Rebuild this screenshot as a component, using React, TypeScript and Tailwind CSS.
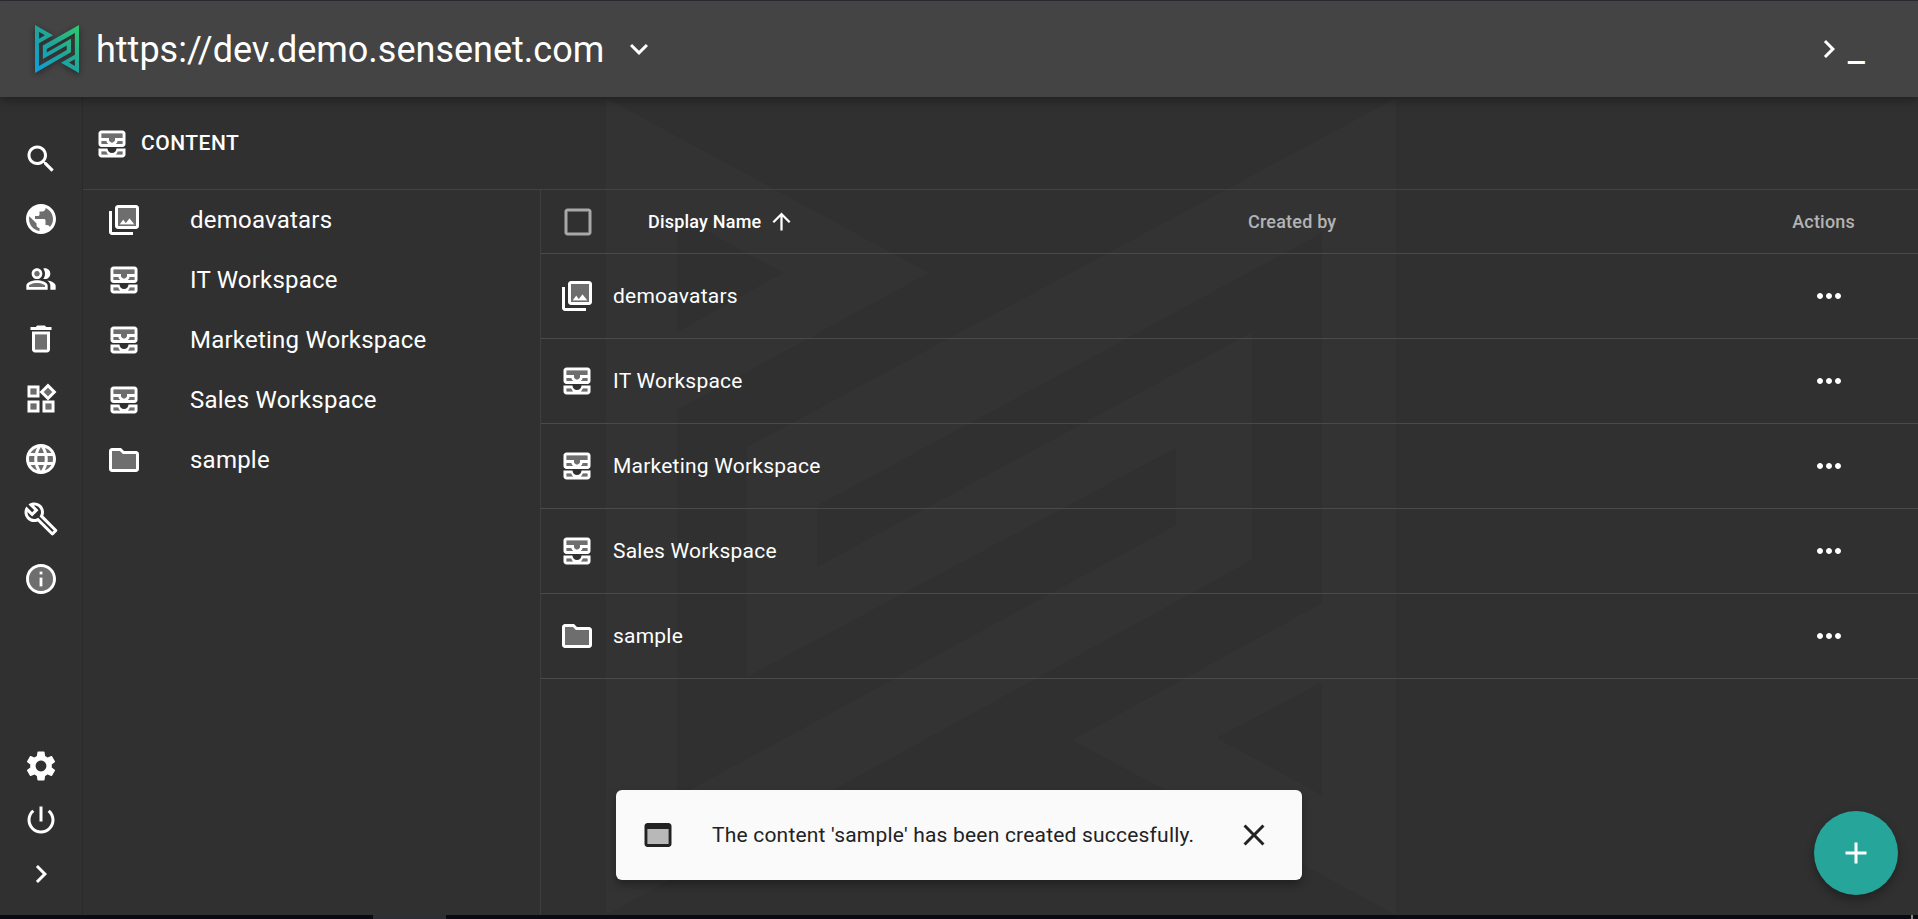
import type { ReactNode } from 'react';

// the mark is one band plus two triangular holes
const LOGO_PATH =
  'M1396 98V915L1072 740L1322 603V233L817 506V567L1252 332V560L606 915V98L929 273L677 410V797L1176 525V448L747 677V447Z' +
  'M677 215L783 273L677 332Z' +
  'M1322 682L1217 738L1322 795Z';

function Icon({ size = 36, className = '', children }: { size?: number; className?: string; children: ReactNode }) {
  return (
    <svg width={size} height={size} viewBox="0 0 24 24" fill="currentColor" className={`shrink-0 ${className}`}>
      {children}
    </svg>
  );
}

const Tone = ({ d }: { d: string }) => <path d={d} opacity={0.3} />;

const SearchIcon = () => (
  <Icon>
    <path d="M15.5 14h-.79l-.28-.27C15.41 12.59 16 11.11 16 9.5 16 5.91 13.09 3 9.5 3S3 5.91 3 9.5 5.91 16 9.5 16c1.61 0 3.09-.59 4.23-1.57l.27.28v.79l5 4.99L20.49 19l-4.99-5zm-6 0C7.01 14 5 11.99 5 9.5S7.01 5 9.5 5 14 7.01 14 9.5 11.99 14 9.5 14z" />
  </Icon>
);

const PublicIcon = () => (
  <Icon>
    <circle cx="12" cy="12" r="9" opacity={0.3} />
    <path d="M12 2C6.48 2 2 6.48 2 12s4.48 10 10 10 10-4.48 10-10S17.52 2 12 2zm-1 17.93c-3.95-.49-7-3.85-7-7.93 0-.62.08-1.21.21-1.79L9 15v1c0 1.1.9 2 2 2v1.93zm6.9-2.54c-.26-.81-1-1.39-1.9-1.39h-1v-3c0-.55-.45-1-1-1H8v-2h2c.55 0 1-.45 1-1V7h2c1.1 0 2-.9 2-2v-.41c2.93 1.19 5 4.06 5 7.41 0 2.08-.8 3.97-2.1 5.39z" />
  </Icon>
);

const GroupIcon = () => (
  <Icon size={32}>
    <circle cx="9" cy="8" r="2" opacity={0.3} />
    <Tone d="M9 15c-2.7 0-5.8 1.29-6 2.01V18h12v-1c-.2-.71-3.3-2-6-2z" />
    <path d="M16.67 13.13C18.04 14.06 19 15.32 19 17v3h4v-3c0-2.18-3.57-3.47-6.33-3.87zM15 12c2.21 0 4-1.79 4-4s-1.79-4-4-4c-.47 0-.91.1-1.33.24C14.5 5.27 15 6.58 15 8s-.5 2.73-1.33 3.76c.42.14.86.24 1.33.24zM9 12c2.21 0 4-1.79 4-4s-1.79-4-4-4-4 1.79-4 4 1.79 4 4 4zm0-6c1.1 0 2 .9 2 2s-.9 2-2 2-2-.9-2-2 .9-2 2-2zM9 13c-2.67 0-8 1.34-8 4v3h16v-3c0-2.66-5.33-4-8-4zm6 5H3v-.99C3.2 16.29 6.3 15 9 15s5.8 1.29 6 2v1z" />
  </Icon>
);

const DeleteIcon = () => (
  <Icon>
    <Tone d="M8 9h8v10H8z" />
    <path d="M15.5 4l-1-1h-5l-1 1H5v2h14V4zM6 19c0 1.1.9 2 2 2h8c1.1 0 2-.9 2-2V7H6v12zM8 9h8v10H8V9z" />
  </Icon>
);

const WidgetsIcon = () => (
  <Icon>
    <Tone d="M5 5h4v4H5zM15 15h4v4h-4zM5 15h4v4H5zM16.66 4.52l-2.83 2.82 2.83 2.83 2.83-2.83z" />
    <path d="M13 13v8h8v-8h-8zm6 6h-4v-4h4v4zM3 21h8v-8H3v8zm2-6h4v4H5v-4zM3 3v8h8V3H3zm6 6H5V5h4v4zm7.66-7.31L11 7.34 16.66 13l5.66-5.66-5.66-5.65zm0 8.48l-2.83-2.83 2.83-2.83 2.83 2.83-2.83 2.83z" />
  </Icon>
);

const LanguageIcon = () => (
  <Icon>
    <circle cx="12" cy="12" r="9" opacity={0.3} />
    <path d="M11.99 2C6.47 2 2 6.48 2 12s4.47 10 9.99 10C17.52 22 22 17.52 22 12S17.52 2 11.99 2zm6.93 6h-2.95c-.32-1.25-.78-2.45-1.38-3.56 1.84.63 3.37 1.91 4.33 3.56zM12 4.04c.83 1.2 1.48 2.53 1.91 3.96h-3.82c.43-1.43 1.08-2.76 1.91-3.96zM4.26 14C4.1 13.36 4 12.69 4 12s.1-1.36.26-2h3.38c-.08.66-.14 1.32-.14 2 0 .68.06 1.34.14 2H4.26zm.82 2h2.95c.32 1.25.78 2.45 1.38 3.56-1.84-.63-3.37-1.9-4.33-3.56zm2.95-8H5.08c.96-1.66 2.49-2.93 4.33-3.56C8.81 5.55 8.35 6.75 8.03 8zM12 19.96c-.83-1.2-1.48-2.53-1.91-3.96h3.82c-.43 1.43-1.08 2.76-1.91 3.96zM14.34 14H9.66c-.09-.66-.16-1.32-.16-2 0-.68.07-1.35.16-2h4.68c.09.65.16 1.32.16 2 0 .68-.07 1.34-.16 2zm.25 5.56c.6-1.11 1.06-2.31 1.38-3.56h2.95c-.96 1.65-2.49 2.93-4.33 3.56zM16.36 14c.08-.66.14-1.32.14-2 0-.68-.06-1.34-.14-2h3.38c.16.64.26 1.31.26 2s-.1 1.36-.26 2h-3.38z" />
  </Icon>
);

const BuildIcon = () => (
  <Icon>
    <path d="M22.61 18.99l-9.08-9.08c.93-2.34.45-5.1-1.44-7C9.79.61 6.21.4 3.66 2.25L7.5 6.1 6.08 7.5 2.25 3.69C.4 6.23.61 9.82 2.91 12.11c1.86 1.86 4.57 2.35 6.88 1.48l9.11 9.11c.39.39 1.02.39 1.41 0l2.3-2.3c.4-.38.4-1.01 0-1.41zm-3 1.6l-9.46-9.46c-.61.45-1.29.72-2 .82-1.36.2-2.79-.21-3.83-1.25C3.37 9.76 2.93 8.5 3 7.26l3.09 3.09 4.24-4.24-3.09-3.09c1.24-.07 2.49.37 3.44 1.31 1.08 1.08 1.49 2.57 1.24 3.96-.12.71-.42 1.37-.88 1.96l9.45 9.45-.88.88z" />
  </Icon>
);

const InfoIcon = () => (
  <Icon>
    <Tone d="M12 4c-4.41 0-8 3.59-8 8s3.59 8 8 8 8-3.59 8-8-3.59-8-8-8zm1 13h-2v-6h2v6zm0-8h-2V7h2v2z" />
    <path d="M11 7h2v2h-2zm0 4h2v6h-2zm1-9C6.48 2 2 6.48 2 12s4.48 10 10 10 10-4.48 10-10S17.52 2 12 2zm0 18c-4.41 0-8-3.59-8-8s3.59-8 8-8 8 3.59 8 8-3.59 8-8 8z" />
  </Icon>
);

const SettingsIcon = () => (
  <Icon>
    <path d="M19.14 12.94c.04-.3.06-.61.06-.94 0-.32-.02-.64-.07-.94l2.03-1.58c.18-.14.23-.41.12-.61l-1.92-3.32c-.12-.22-.37-.29-.59-.22l-2.39.96c-.5-.38-1.03-.7-1.62-.94l-.36-2.54c-.04-.24-.24-.41-.48-.41h-3.84c-.24 0-.43.17-.47.41l-.36 2.54c-.59.24-1.13.57-1.62.94l-2.39-.96c-.22-.08-.47 0-.59.22L2.74 8.87c-.12.21-.08.47.12.61l2.03 1.58c-.05.3-.09.63-.09.94s.02.64.07.94l-2.03 1.58c-.18.14-.23.41-.12.61l1.92 3.32c.12.22.37.29.59.22l2.39-.96c.5.38 1.03.7 1.62.94l.36 2.54c.05.24.24.41.48.41h3.84c.24 0 .44-.17.47-.41l.36-2.54c.59-.24 1.13-.56 1.62-.94l2.39.96c.22.08.47 0 .59-.22l1.92-3.32c.12-.22.07-.47-.12-.61l-2.01-1.58zM12 15.6c-1.98 0-3.6-1.62-3.6-3.6s1.62-3.6 3.6-3.6 3.6 1.62 3.6 3.6-1.62 3.6-3.6 3.6z" />
  </Icon>
);

const PowerIcon = () => (
  <Icon>
    <path d="M13 3h-2v10h2V3zm4.83 2.17l-1.42 1.42C17.99 7.86 19 9.81 19 12c0 3.87-3.13 7-7 7s-7-3.13-7-7c0-2.19 1.01-4.14 2.58-5.42L6.17 5.17C4.23 6.82 3 9.26 3 12c0 4.97 4.03 9 9 9s9-4.03 9-9c0-2.74-1.23-5.18-3.17-6.83z" />
  </Icon>
);

const ChevronRight = () => (
  <Icon>
    <path d="M10 6L8.59 7.41 13.17 12l-4.58 4.59L10 18l6-6z" />
  </Icon>
);

const ExpandMore = () => (
  <Icon>
    <path d="M16.59 8.59L12 13.17 7.41 8.59 6 10l6 6 6-6z" />
  </Icon>
);

const InboxIcon = () => (
  <Icon>
    <Tone d="M5 5h14v3h-5v1c0 1.1-.9 2-2 2s-2-.9-2-2V8H5zM5 10h3.13c.21.78.67 1.47 1.27 2H5zM19 12h-4.4c.6-.53 1.06-1.22 1.27-2H19zM5 17h3.13c.21.78.67 1.47 1.27 2H5zM19 19h-4.4c.6-.53 1.06-1.22 1.27-2H19z" />
    <path
      fillRule="evenodd"
      d="M19 3H5c-1.1 0-2 .9-2 2v7c0 1.1.9 2 2 2h14c1.1 0 2-.9 2-2V5c0-1.1-.9-2-2-2zM5 10h3.13c.21.78.67 1.47 1.27 2H5zm14 2h-4.4c.6-.53 1.06-1.22 1.27-2H19zm0-4h-5v1c0 1.1-.9 2-2 2s-2-.9-2-2V8H5V5h14zM15 15c0 1.66-1.34 3-3 3s-3-1.34-3-3H3v4c0 1.1.9 2 2 2h14c1.1 0 2-.9 2-2v-4zM5 17h3.13c.21.78.67 1.47 1.27 2H5zm14 2h-4.4c.6-.53 1.06-1.22 1.27-2H19z"
    />
  </Icon>
);

const PhotoLibraryIcon = () => (
  <Icon>
    <Tone d="M8 16h12V4H8v12zm3.5-4.33l1.69 2.26 2.48-3.09L19 15H9l2.5-3.33z" />
    <path d="M20 4v12H8V4h12m0-2H8c-1.1 0-2 .9-2 2v12c0 1.1.9 2 2 2h12c1.1 0 2-.9 2-2V4c0-1.1-.9-2-2-2zm-8.5 9.67l1.69 2.26 2.48-3.1L19 15H9zM2 6v14c0 1.1.9 2 2 2h14v-2H4V6H2z" />
  </Icon>
);

const FolderIcon = () => (
  <Icon>
    <Tone d="M11.17 8l-.59-.59L9.17 6H4v12h16V8h-8z" />
    <path d="M20 6h-8l-2-2H4c-1.1 0-1.99.9-1.99 2L2 18c0 1.1.9 2 2 2h16c1.1 0 2-.9 2-2V8c0-1.1-.9-2-2-2zm0 12H4V6h5.17l1.41 1.41.59.59H20v10z" />
  </Icon>
);

const items = [
  { name: 'demoavatars', icon: <PhotoLibraryIcon /> },
  { name: 'IT Workspace', icon: <InboxIcon /> },
  { name: 'Marketing Workspace', icon: <InboxIcon /> },
  { name: 'Sales Workspace', icon: <InboxIcon /> },
  { name: 'sample', icon: <FolderIcon /> },
];

const navTop = [SearchIcon, PublicIcon, GroupIcon, DeleteIcon, WidgetsIcon, LanguageIcon, BuildIcon, InfoIcon];
const navBottom = [SettingsIcon, PowerIcon, ChevronRight];

function Logo() {
  return (
    <svg width="44" height="48" viewBox="606 98 790 817" preserveAspectRatio="none" className="shrink-0 drop-shadow-[0_2px_3px_rgba(0,0,0,0.45)]">
      <defs>
        <linearGradient id="logoGrad" x1="606" y1="915" x2="1396" y2="98" gradientUnits="userSpaceOnUse">
          <stop offset="0" stopColor="#0c9ee0" />
          <stop offset="0.5" stopColor="#1fa59a" />
          <stop offset="1" stopColor="#2fc96c" />
        </linearGradient>
      </defs>
      <path d={LOGO_PATH} fill="url(#logoGrad)" fillRule="evenodd" />
    </svg>
  );
}

export default function App() {
  return (
    <div className="relative flex h-screen w-full flex-col overflow-hidden bg-[#0a0a14] font-[Roboto,sans-serif] text-white">
      <div className="h-px bg-[#2a2e33]" />

      <header className="relative z-20 flex h-[96px] shrink-0 items-center justify-between bg-[#444444] pl-[35px] pr-[53px] shadow-[0_3px_10px_rgba(0,0,0,0.35)]">
        <div className="flex items-center">
          <Logo />
          <span className="ml-[17px] mt-[2px] text-[36px] leading-none">https://dev.demo.sensenet.com</span>
          <span className="ml-[17px]">
            <ExpandMore />
          </span>
        </div>
        <div className="flex items-center">
          <ChevronRight />
          <span className="ml-[1px] mt-[-3px] text-[38px] leading-none">_</span>
        </div>
      </header>

      <div className="relative flex min-h-0 flex-1 bg-[#303030]">
        {/* faint logo behind the content */}
        <svg className="pointer-events-none absolute left-0 top-[-97px] h-[919px] w-[1918px]" viewBox="0 0 1918 919">
          <path d={LOGO_PATH} fill="#333333" fillRule="evenodd" />
        </svg>

        <nav className="relative flex w-[83px] shrink-0 flex-col justify-between border-r border-[#2a2a2a] bg-[#303030] pb-[14px] pt-[32px]">
          <div className="flex flex-col items-center">
            {navTop.map((NavIcon, i) => (
              <div key={i} className="flex h-[60px] items-center justify-center">
                <NavIcon />
              </div>
            ))}
          </div>
          <div className="flex flex-col items-center">
            {navBottom.map((NavIcon, i) => (
              <div key={i} className="flex h-[54px] items-center justify-center">
                <NavIcon />
              </div>
            ))}
          </div>
        </nav>

        <main className="relative flex min-w-0 flex-1 flex-col">
          <div className="flex h-[93px] shrink-0 items-center border-b border-[#424242] pl-[11px] pt-[2px]">
            <InboxIcon />
            <span className="ml-[11px] text-[21px] font-medium uppercase tracking-[0.5px]">Content</span>
          </div>

          <div className="flex min-h-0 flex-1">
            <aside className="w-[458px] shrink-0 border-r border-[#3e3e3e]">
              {items.map((item) => (
                <div key={item.name} className="flex h-[60px] items-center pl-[23px]">
                  {item.icon}
                  <span className="ml-[48px] text-[24px] leading-none tracking-[0.225px]">{item.name}</span>
                </div>
              ))}
            </aside>

            <section className="min-w-0 flex-1">
              <div className="flex h-[64px] items-center border-b border-[#4a4a4a] pl-[19px] text-[18px] font-medium tracking-[0.2px]">
                <svg width="36" height="36" viewBox="0 0 24 24" fill="currentColor" className="shrink-0 text-[#a8a8a8]">
                  <path d="M19 5v14H5V5h14m0-2H5c-1.1 0-2 .9-2 2v14c0 1.1.9 2 2 2h14c1.1 0 2-.9 2-2V5c0-1.1-.9-2-2-2z" />
                </svg>
                <div className="ml-[52px] flex w-[600px] items-center">
                  <span>Display Name</span>
                  <span className="ml-[7px]">
                    <Icon size={27}>
                      <path d="M4 12l1.41 1.41L11 7.83V20h2V7.83l5.58 5.59L20 12l-8-8-8 8z" />
                    </Icon>
                  </span>
                </div>
                <span className="text-[#b3b3b3]">Created by</span>
                <span className="ml-auto mr-[63px] text-[#b3b3b3]">Actions</span>
              </div>

              {items.map((item) => (
                <div key={item.name} className="flex h-[85px] items-center border-b border-[#4a4a4a] pl-[18px] pr-[71px]">
                  {item.icon}
                  <span className="ml-[18px] text-[21px] leading-none tracking-[0.225px]">{item.name}</span>
                  <span className="ml-auto">
                    <Icon>
                      <path d="M6 10c-1.1 0-2 .9-2 2s.9 2 2 2 2-.9 2-2-.9-2-2-2zm12 0c-1.1 0-2 .9-2 2s.9 2 2 2 2-.9 2-2-.9-2-2-2zm-6 0c-1.1 0-2 .9-2 2s.9 2 2 2 2-.9 2-2-.9-2-2-2z" />
                    </Icon>
                  </span>
                </div>
              ))}
            </section>
          </div>
        </main>

        {/* snackbar */}
        <div className="absolute left-[616px] top-[693px] flex h-[90px] w-[686px] items-center rounded-[6px] bg-[#fafafa] pl-[24px] text-[#222222] shadow-[0_5px_8px_rgba(0,0,0,0.3)]">
          <Icon>
            <path d="M5 8h14v10H5z" opacity={0.3} />
            <path d="M19 4H5c-1.11 0-2 .9-2 2v12c0 1.1.89 2 2 2h14c1.1 0 2-.9 2-2V6c0-1.1-.89-2-2-2zm0 14H5V8h14v10z" />
          </Icon>
          <span className="ml-[36px] text-[21px] leading-none tracking-[0.2px]">The content 'sample' has been created succesfully.</span>
          <span className="ml-[42px]">
            <Icon>
              <path d="M19 6.41L17.59 5 12 10.59 6.41 5 5 6.41 10.59 12 5 17.59 6.41 19 12 13.41 17.59 19 19 17.59 13.41 12z" />
            </Icon>
          </span>
        </div>

        {/* add button */}
        <div className="absolute left-[1814px] top-[714px] flex h-[84px] w-[84px] items-center justify-center rounded-full bg-[#26a69a] shadow-[0_5px_10px_rgba(0,0,0,0.3)]">
          <Icon>
            <path d="M19 13h-6v6h-2v-6H5v-2h6V5h2v6h6v2z" />
          </Icon>
        </div>
      </div>

      <div className="relative z-20 flex h-[4px] shrink-0">
        <div className="ml-[373px] w-[73px] bg-[#2e2e36]" />
        <div className="ml-auto mr-[5px] w-[2px] bg-[#8a8a8a]" />
      </div>
    </div>
  );
}
